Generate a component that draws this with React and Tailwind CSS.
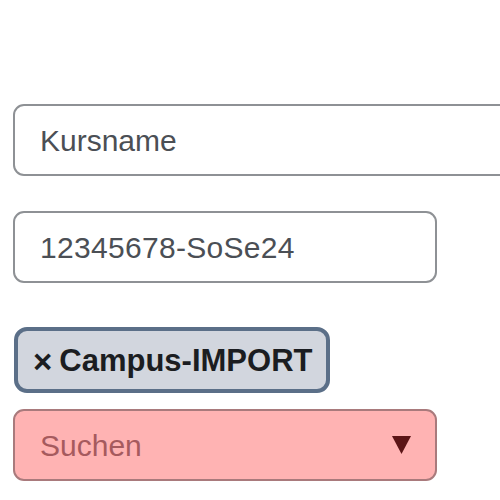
export default function App() {
  return (
    <div className="w-[500px] h-[500px] overflow-hidden bg-white font-['Liberation_Sans',Arial,sans-serif]">
      <div className="flex flex-col items-start pl-[13px] pt-[104px]">
        <div className="w-[560px] h-[72px] flex items-center pl-[25px] border-2 border-[#8e9195] rounded-[11px] text-[30px] text-[#4b4f55]">
          Kursname
        </div>
        <div className="mt-[35px] w-[424px] h-[72px] flex items-center pl-[25px] border-2 border-[#8e9195] rounded-[11px] text-[30px] tracking-[0.3px] text-[#4b4f55]">
          12345678-SoSe24
        </div>
        <div className="mt-[44px] ml-px h-[66px] flex items-center pt-[3px] pl-[15px] pr-[14px] bg-[#d2d6de] border-4 border-[#5b6f88] rounded-[13px] font-bold text-[#1b1d21]">
          <span className="text-[33px] leading-none mr-[7px]">×</span>
          <span className="text-[31px]">Campus-IMPORT</span>
        </div>
        <div className="mt-[16px] w-[424px] h-[72px] flex items-center justify-between pl-[25px] pr-[24px] bg-[#ffb3b3] border-2 border-[#a97a7c] rounded-[11px] text-[30px] text-[#a65a5e]">
          <span>Suchen</span>
          <svg width="19" height="18" viewBox="0 0 19 18">
            <polygon points="0,0 19,0 9.5,18" fill="#5c1517" />
          </svg>
        </div>
      </div>
    </div>
  );
}
